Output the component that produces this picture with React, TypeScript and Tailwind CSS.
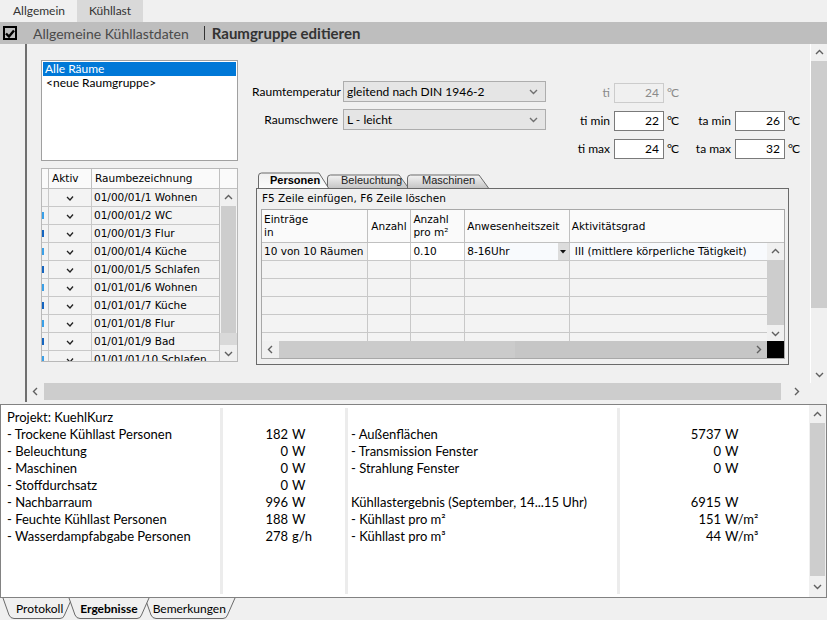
import React from 'react';

const UI = "font-['Lato','Noto_Sans',sans-serif]";
const GRID = "font-['DejaVu_Sans','Noto_Sans',sans-serif]";
const TAB = "font-['Liberation_Sans','Noto_Sans',sans-serif]";

type Dir = 'up' | 'down' | 'left' | 'right';

function Chev({ dir, color = '#606060' }: { dir: Dir; color?: string }) {
  const pts = {
    up: '1,6 4.5,2.5 8,6',
    down: '1,3 4.5,6.5 8,3',
    left: '6,1 2.5,4.5 6,8',
    right: '3,1 6.5,4.5 3,8',
  }[dir];
  return (
    <svg width="9" height="9" viewBox="0 0 9 9">
      <polyline points={pts} fill="none" stroke={color} strokeWidth="1.4" />
    </svg>
  );
}

const ROOMS = [
  '01/00/01/1 Wohnen',
  '01/00/01/2 WC',
  '01/00/01/3 Flur',
  '01/00/01/4 Küche',
  '01/00/01/5 Schlafen',
  '01/01/01/6 Wohnen',
  '01/01/01/7 Küche',
  '01/01/01/8 Flur',
  '01/01/01/9 Bad',
  '01/01/01/10 Schlafen',
];

const LEFT_RESULTS = [
  ['- Trockene Kühllast Personen', '182', 'W'],
  ['- Beleuchtung', '0', 'W'],
  ['- Maschinen', '0', 'W'],
  ['- Stoffdurchsatz', '0', 'W'],
  ['- Nachbarraum', '996', 'W'],
  ['- Feuchte Kühllast Personen', '188', 'W'],
  ['- Wasserdampfabgabe Personen', '278', 'g/h'],
];

const RIGHT_RESULTS: (string[] | null)[] = [
  ['- Außenflächen', '5737', 'W'],
  ['- Transmission Fenster', '0', 'W'],
  ['- Strahlung Fenster', '0', 'W'],
  null,
  ['Kühllastergebnis (September, 14...15 Uhr)', '6915', 'W'],
  ['- Kühllast pro m²', '151', 'W/m²'],
  ['- Kühllast pro m³', '44', 'W/m³'],
];

function Combo({ value }: { value: string }) {
  return (
    <div className="w-[203px] h-[21px] bg-[#e5e5e5] border border-[#adadad] flex items-center pl-[3px] pr-[7px]">
      <span className="flex-1 text-[12px] text-black">{value}</span>
      <Chev dir="down" color="#707070" />
    </div>
  );
}

function TempInput({ value, disabled }: { value: string; disabled?: boolean }) {
  return (
    <div
      className={`w-[50px] h-[20px] border flex items-center justify-end pr-[4px] text-[12px] ${
        disabled ? 'bg-[#f0f0f0] border-[#cccccc] text-[#8a8a8a]' : 'bg-white border-[#7a7a7a] text-black'
      }`}
    >
      {value}
    </div>
  );
}

function TempRow({
  label,
  value,
  disabled,
  label2,
  value2,
}: {
  label: string;
  value: string;
  disabled?: boolean;
  label2?: string;
  value2?: string;
}) {
  return (
    <div className="flex items-center h-[20px] text-[12px]">
      <span className={`w-[51px] text-right pr-[4px] ${disabled ? 'text-[#8a8a8a]' : 'text-black'}`}>{label}</span>
      <TempInput value={value} disabled={disabled} />
      <span className={`w-[20px] pl-[3px] tracking-[-1px] ${disabled ? 'text-[#8a8a8a]' : 'text-black'}`}>°C</span>
      {label2 && (
        <>
          <span className="w-[51px] text-right pr-[4px]">{label2}</span>
          <TempInput value={value2 ?? ''} />
          <span className="pl-[3px] tracking-[-1px]">°C</span>
        </>
      )}
    </div>
  );
}

function RoomTable() {
  return (
    <div className={`mt-[7px] w-[197px] h-[194px] overflow-hidden border border-[#b8b8b8] bg-[#f3f3f3] flex ${GRID} text-[10.5px] text-black`}>
      <div className="flex-1 flex flex-col">
        {/* Kopfzeile */}
        <div className="flex h-[20px] shrink-0 bg-[#fafafa] border-b border-[#c0c0c0]">
          <div className="w-[7px] border-r border-[#c0c0c0]" />
          <div className="w-[43px] border-r border-[#c0c0c0] flex items-center pl-[3px]">Aktiv</div>
          <div className="flex-1 flex items-center pl-[3px]">Raumbezeichnung</div>
        </div>
        {ROOMS.map((r, i) => (
          <div key={r} className="flex h-[18px] shrink-0 border-b border-[#c8c8c8]">
            {/* abgeschnittene Zeilennummer */}
            <div className="w-[7px] border-r border-[#c8c8c8] flex justify-start items-center">
              {i > 0 && <div className={`w-[2px] h-[7px] ${i % 2 ? 'bg-[#3aa0e8]' : 'bg-[#1565c0]'}`} />}
            </div>
            <div className="w-[43px] border-r border-[#c8c8c8] flex items-center justify-center">
              <svg width="8" height="6" viewBox="0 0 8 6">
                <polyline points="1,2 4,5 7,1.5" fill="none" stroke="#222" strokeWidth="1.3" />
              </svg>
            </div>
            <div className="flex-1 flex items-center pl-[2px] whitespace-nowrap">{r}</div>
          </div>
        ))}
      </div>
      {/* Scrollleiste */}
      <div className="w-[18px] shrink-0 flex flex-col border-l border-[#c0c0c0]">
        <div className="h-[20px] bg-[#fafafa] border-b border-[#c0c0c0]" />
        <div className="h-[17px] bg-[#f0f0f0] flex items-center justify-center">
          <Chev dir="up" />
        </div>
        <div className="h-[128px] mx-[1px] bg-[#cdcdcd]" />
        <div className="h-[12px] bg-[#d9d9d9]" />
        <div className="h-[16px] bg-[#f0f0f0] flex items-center justify-center">
          <Chev dir="down" />
        </div>
      </div>
    </div>
  );
}

function Tab({
  label,
  selected,
  width,
  first,
  pad,
}: {
  label: string;
  selected?: boolean;
  width: number;
  first?: boolean;
  pad: number;
}) {
  const top = selected ? 1 : 3;
  const h = 16;
  const w = width;
  const d = `M0.5,${h} L0.5,${top + 3} Q0.5,${top} 3.5,${top} L${w - 10},${top} L${w - 0.5},${h}`;
  return (
    <div
      className={`relative h-[16px] flex items-end pb-[1px] ${first ? '' : 'ml-[-2px]'} ${
        selected ? 'z-10 font-bold' : ''
      }`}
      style={{ width, paddingLeft: pad }}
    >
      <svg className="absolute inset-0" width={w} height={h + 1} viewBox={`0 0 ${w} ${h + 1}`}>
        <defs>
          <linearGradient id={`g-${label}`} x1="0" y1="0" x2="0" y2="1">
            {selected ? (
              <>
                <stop offset="0" stopColor="#f0f0f0" />
                <stop offset="1" stopColor="#fbfbfb" />
              </>
            ) : (
              <>
                <stop offset="0" stopColor="#f4f4f4" />
                <stop offset="1" stopColor="#c6c6c6" />
              </>
            )}
          </linearGradient>
        </defs>
        <path d={`${d} Z`} fill={`url(#g-${label})`} />
        <path d={d} fill="none" stroke="#6a6a6a" strokeWidth="1" />
      </svg>
      <span className={`relative text-[11px] leading-[14px] ${TAB} ${selected ? 'text-black' : 'text-[#222]'}`}>
        {label}
      </span>
    </div>
  );
}

function PersonTable() {
  const cols = ['w-[106px]', 'w-[44px]', 'w-[54px]', 'w-[105px]', 'w-[198px]'];
  return (
    <div className={`w-[524px] h-[150px] border border-[#a8a8a8] flex flex-col bg-[#f3f3f3] ${GRID} text-[10.5px] text-black`}>
      <div className="flex-1 flex min-h-0">
        <div className="flex-1 flex flex-col overflow-hidden">
          {/* Kopfzeile */}
          <div className="flex h-[33px] shrink-0 bg-[#fafafa] border-b border-[#c0c0c0] leading-[13px]">
            <div className={`${cols[0]} border-r border-[#c0c0c0] pl-[2px] pt-[3px]`}>
              Einträge
              <br />
              in
            </div>
            <div className={`${cols[1]} border-r border-[#c0c0c0] flex items-center justify-center`}>Anzahl</div>
            <div className={`${cols[2]} border-r border-[#c0c0c0] pl-[2px] pt-[3px]`}>
              Anzahl
              <br />
              pro m²
            </div>
            <div className={`${cols[3]} border-r border-[#c0c0c0] flex items-center pl-[2px]`}>Anwesenheitszeit</div>
            <div className={`${cols[4]} flex items-center pl-[2px]`}>Aktivitätsgrad</div>
          </div>
          {/* erste Zeile */}
          <div className="flex h-[18px] shrink-0 border-b border-[#c8c8c8]">
            <div className={`${cols[0]} border-r border-[#c8c8c8] flex items-center pl-[2px]`}>10 von 10 Räumen</div>
            <div className={`${cols[1]} border-r border-[#c8c8c8] bg-white`} />
            <div className={`${cols[2]} border-r border-[#c8c8c8] bg-white flex items-center pl-[2px]`}>0.10</div>
            <div className={`${cols[3]} border-r border-[#c8c8c8] bg-[#f8fafd] flex items-center pl-[2px]`}>
              <span className="flex-1">8-16Uhr</span>
              <span className="w-[11px] h-full bg-[#dcdcdc] flex items-center justify-center">
                <svg width="6" height="4" viewBox="0 0 6 4">
                  <polygon points="0,0 6,0 3,3.5" fill="#111" />
                </svg>
              </span>
            </div>
            <div className={`${cols[4]} bg-[#f8fafd] flex items-center pl-[5px] whitespace-nowrap`}>
              III (mittlere körperliche Tätigkeit)
            </div>
          </div>
          {[0, 1, 2, 3, 4].map((i) => (
            <div key={i} className="flex h-[18px] shrink-0 border-b border-[#c8c8c8]">
              {cols.map((c, j) => (
                <div key={j} className={`${c} ${j < 4 ? 'border-r border-[#c8c8c8]' : ''}`} />
              ))}
            </div>
          ))}
        </div>
        {/* vertikale Scrollleiste */}
        <div className="w-[17px] shrink-0 flex flex-col bg-[#fafafa]">
          <div className="h-[33px] border-b border-[#c0c0c0]" />
          <div className="h-[17px] bg-[#f0f0f0] flex items-center justify-center">
            <Chev dir="up" />
          </div>
          <div className="h-[65px] bg-[#cdcdcd]" />
          <div className="flex-1 bg-[#f0f0f0] flex items-center justify-center">
            <Chev dir="down" />
          </div>
        </div>
      </div>
      {/* horizontale Scrollleiste */}
      <div className="h-[17px] shrink-0 flex bg-[#f0f0f0]">
        <div className="w-[17px] flex items-center justify-center">
          <Chev dir="left" />
        </div>
        <div className="w-[236px] bg-[#cbcbcb]" />
        <div className="flex-1 bg-[#c6c6c6]" />
        <div className="w-[17px] bg-[#c6c6c6] flex items-center justify-center">
          <Chev dir="right" />
        </div>
        <div className="w-[17px] bg-black" />
      </div>
    </div>
  );
}

function BottomTabs() {
  const tabs = [
    { label: 'Protokoll', x: 3, w: 69 },
    { label: 'Bemerkungen', x: 145, w: 90 },
    { label: 'Ergebnisse', x: 69, w: 80, sel: true },
  ];
  return (
    <div className="relative h-[22px]">
      <svg className="absolute left-0 top-0" width="260" height="22" viewBox="0 0 260 22">
        {tabs.map((t) => (
          <path
            key={t.label}
            d={`M${t.x},0 L${t.x + 6},17 Q${t.x + 7.5},20.5 ${t.x + 11},20.5 L${t.x + t.w - 12},20.5 Q${t.x + t.w - 8.5},20.5 ${t.x + t.w - 7.5},17 L${t.x + t.w},0`}
            fill="#f0f0f0"
            stroke="#6a6a6a"
            strokeWidth="1"
          />
        ))}
      </svg>
      <div className={`relative flex h-full items-center text-[12px] ${UI}`}>
        <span className="ml-[16px] text-black">Protokoll</span>
        <span className="ml-[17px] font-bold text-black">Ergebnisse</span>
        <span className="ml-[15px] text-black">Bemerkungen</span>
      </div>
    </div>
  );
}

export default function App() {
  return (
    <div className={`w-[827px] h-[620px] bg-[#f0f0f0] flex flex-col overflow-hidden ${UI} text-[12px] text-black`}>
      {/* Reiter oben */}
      <div className="h-[22px] flex items-end shrink-0">
        <div className="ml-[13px] h-[22px] flex items-center text-[#333] text-[12px]">Allgemein</div>
        <div className="ml-[12px] w-[66px] h-[22px] bg-[#d9d9d9] flex items-center justify-center text-[#333] text-[12px]">
          Kühllast
        </div>
      </div>

      {/* Titelleiste */}
      <div className="h-[22px] bg-[#bebebe] flex items-center shrink-0">
        <div className="ml-[3px] w-[14px] h-[14px] border-2 border-black flex items-center justify-center">
          <svg width="10" height="9" viewBox="0 0 10 9">
            <polyline points="1,4.5 4,7.5 9,1.5" fill="none" stroke="#000" strokeWidth="2.4" />
          </svg>
        </div>
        <span className="ml-[16px] text-[14px] text-[#4a4a4a]">Allgemeine Kühllastdaten</span>
        <span className="ml-[15px] w-[1px] h-[14px] bg-[#333]" />
        <span className="ml-[7px] text-[15px] font-bold text-[#333]">Raumgruppe editieren</span>
      </div>

      {/* Hauptbereich */}
      <div className="h-[358px] flex shrink-0">
        <div className="w-[25px] shrink-0" />
        <div className="w-[2px] shrink-0 bg-[#6f6f6f]" />
        <div className="flex-1 flex flex-col min-w-0">
          <div className="h-[339px] flex">
            <div className="flex-1 flex pl-[14px] pt-[16px]">
              {/* linke Spalte */}
              <div className="w-[197px] flex flex-col">
                <div className="h-[101px] bg-white border border-[#a0a0a0] p-[1px]">
                  <div className="h-[14px] bg-[#0078d7] text-white flex items-center pl-[2px]">Alle Räume</div>
                  <div className="h-[14px] flex items-center pl-[3px]">&lt;neue Raumgruppe&gt;</div>
                </div>
                <RoomTable />
              </div>

              {/* rechte Spalte */}
              <div className="ml-[18px] w-[533px] flex flex-col">
                <div className="mt-[21px] flex items-start">
                  <div className="flex flex-col gap-[7px]">
                    <div className="flex items-center">
                      <span className="w-[87px] whitespace-nowrap flex justify-end pr-[2px]">Raumtemperatur</span>
                      <Combo value="gleitend nach DIN 1946-2" />
                    </div>
                    <div className="flex items-center">
                      <span className="w-[87px] whitespace-nowrap flex justify-end pr-[5px]">Raumschwere</span>
                      <Combo value="L - leicht" />
                    </div>
                  </div>
                  <div className="ml-[17px] mt-[2px] flex flex-col gap-[8px]">
                    <TempRow label="ti" value="24" disabled />
                    <TempRow label="ti min" value="22" label2="ta min" value2="26" />
                    <TempRow label="ti max" value="24" label2="ta max" value2="32" />
                  </div>
                </div>

                {/* Personen / Beleuchtung / Maschinen */}
                <div className="mt-[13px] flex pl-[2px] h-[16px] relative z-10">
                  <Tab label="Personen" width={71} pad={12} selected first />
                  <Tab label="Beleuchtung" width={82} pad={14} />
                  <Tab label="Maschinen" width={82} pad={15} />
                </div>
                <div className="h-[177px] border border-[#6a6a6a] bg-[#f0f0f0] px-[4px] flex flex-col">
                  <div className={`h-[20px] flex items-center pl-[1px] ${GRID} text-[10.5px]`}>
                    F5 Zeile einfügen, F6 Zeile löschen
                  </div>
                  <PersonTable />
                </div>
              </div>
            </div>

            {/* vertikale Scrollleiste */}
            <div className="w-[17px] shrink-0 flex flex-col border-l border-white">
              <div className="h-[17px] flex items-center justify-center">
                <Chev dir="up" />
              </div>
              <div className="h-[247px] bg-[#cdcdcd]" />
              <div className="flex-1 flex items-end justify-center pb-[4px]">
                <Chev dir="down" />
              </div>
            </div>
          </div>

          {/* horizontale Scrollleiste */}
          <div className="h-[17px] flex">
            <div className="w-[17px] flex items-center justify-center">
              <Chev dir="left" />
            </div>
            <div className="w-[737px] bg-[#cdcdcd]" />
            <div className="w-[30px] flex items-center justify-center">
              <Chev dir="right" />
            </div>
            <div className="flex-1" />
          </div>
        </div>
      </div>

      {/* Ergebnisbereich */}
      <div className="mt-[2px] h-[194px] shrink-0 border border-[#828282] bg-white flex text-[13px] leading-[17px]">
        <div className="flex-1 flex py-[3px]">
          <div className="w-[219px] pl-[6px] pt-[1px] whitespace-nowrap">
            <div>Projekt: KuehlKurz</div>
            {LEFT_RESULTS.map(([l]) => (
              <div key={l}>{l}</div>
            ))}
          </div>
          <div className="w-[3px] bg-[#ececec]" />
          <div className="w-[122px] pt-[18px] whitespace-nowrap">
            {LEFT_RESULTS.map(([l, v, u]) => (
              <div key={l} className="flex">
                <span className="w-[65px] text-right">{v}</span>
                <span className="ml-[4px]">{u}</span>
              </div>
            ))}
          </div>
          <div className="w-[3px] bg-[#ececec]" />
          <div className="w-[269px] pl-[3px] pt-[18px] whitespace-nowrap">
            {RIGHT_RESULTS.map((r, i) => (
              <div key={i} className="h-[17px]">
                {r ? r[0] : ''}
              </div>
            ))}
          </div>
          <div className="w-[3px] bg-[#ececec]" />
          <div className="flex-1 pt-[18px] whitespace-nowrap">
            {RIGHT_RESULTS.map((r, i) => (
              <div key={i} className="h-[17px] flex">
                {r && (
                  <>
                    <span className="w-[101px] text-right">{r[1]}</span>
                    <span className="ml-[4px]">{r[2]}</span>
                  </>
                )}
              </div>
            ))}
          </div>
        </div>
        <div className="w-[17px] shrink-0 bg-[#f0f0f0] flex flex-col">
          <div className="h-[18px] flex items-center justify-center">
            <Chev dir="up" />
          </div>
          <div className="h-[153px] mx-[1px] bg-[#cdcdcd]" />
          <div className="flex-1 flex items-center justify-center">
            <Chev dir="down" />
          </div>
        </div>
      </div>

      <BottomTabs />
    </div>
  );
}
